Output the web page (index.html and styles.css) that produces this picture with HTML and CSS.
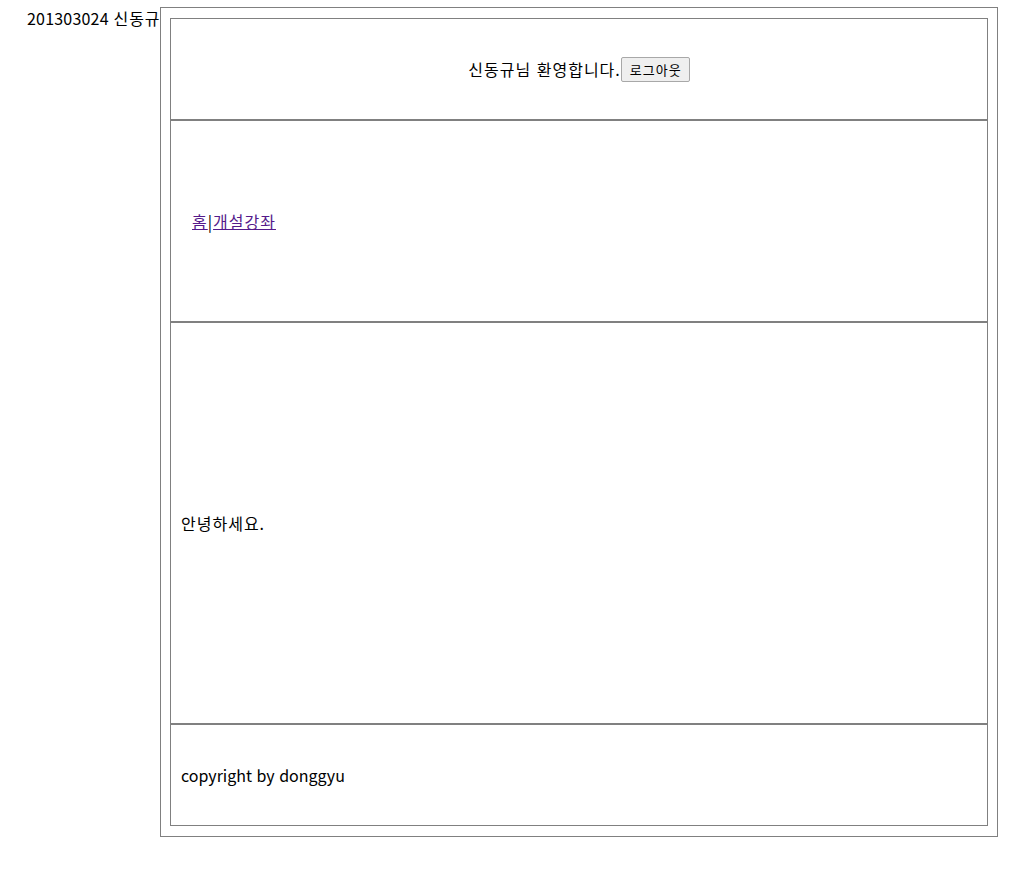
FILE: index.html
```html
<!DOCTYPE html>
<html lang="ko">
<head>
<meta charset="utf-8">
<title>신동규</title>
<link rel="stylesheet" href="styles.css">
</head>
<body>
<div class="student">201303024 <span class="ko">신동규</span></div>
<div class="frame">
  <div class="layout">
    <div class="cell cell-header"><span class="ko">신동규님 환영합니다.</span><button class="logout" type="button">로그아웃</button></div>
    <div class="cell cell-nav ko"><a class="nav-link" href="#">홈</a>|<a class="nav-link" href="#">개설강좌</a></div>
    <div class="cell cell-main ko">안녕하세요.</div>
    <div class="cell cell-footer">copyright by donggyu</div>
  </div>
</div>
</body>
</html>
```

FILE: styles.css
```css
html, body {
  background: #fff;
}
body {
  margin: 8px;
  font-family: "Noto Sans CJK KR", "Noto Sans", sans-serif;
  font-size: 16px;
  color: #000;
}
.ko {
  letter-spacing: 1px;
}
.student {
  padding-left: 19px;
  line-height: 21px;
  letter-spacing: 0.2px;
}
.student .ko {
  letter-spacing: 1px;
}
.frame {
  position: absolute;
  left: 160px;
  top: 7px;
  width: 818px;
  padding: 10px 9px;
  border: 1px solid #808080;
  background: #fff;
}
.layout {
  display: flex;
  flex-direction: column;
}
.cell {
  border: 1px solid #808080;
  display: flex;
  align-items: center;
  padding-left: 10px;
}
.cell-header {
  height: 100px;
  justify-content: center;
  padding-left: 0;
}
.cell-nav {
  height: 200px;
  padding-left: 21px;
}
.cell-main {
  height: 400px;
}
.cell-footer {
  height: 100px;
}
.logout {
  font-family: "Noto Sans CJK KR", sans-serif;
  font-size: 13px;
  line-height: 17px;
  letter-spacing: 1px;
  padding: 3px 7px 3px 8px;
  margin-left: 0;
  background: #efefef;
  border: 1px solid #a8a8a8;
  border-radius: 2px;
  color: #000;
}
.nav-link {
  color: #551a8b;
  text-decoration: underline;
}
```
